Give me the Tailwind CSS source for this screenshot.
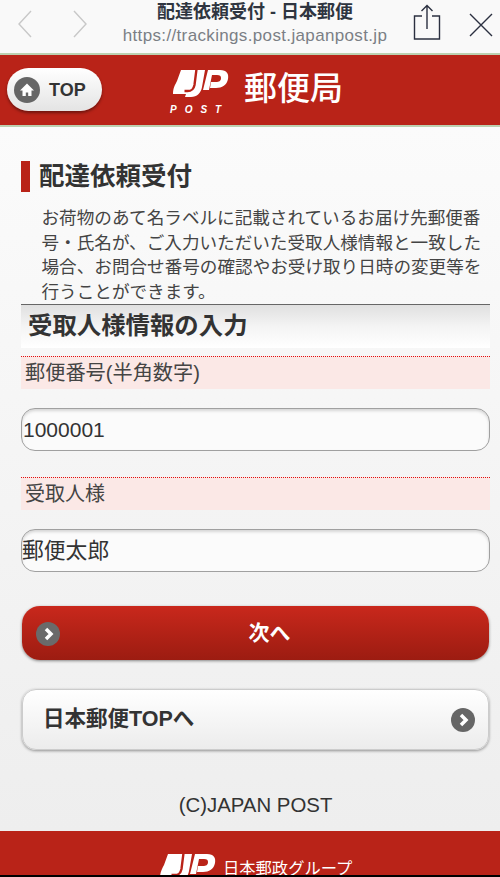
<!DOCTYPE html>
<html lang="ja"><head><meta charset="utf-8">
<script src="https://cdn.jsdelivr.net/npm/@tailwindcss/browser@4"></script>
</head>
<body class="m-0 w-[500px] h-[877px] overflow-hidden bg-[#f0f0f0] text-[#333] font-['Liberation_Sans','Noto_Sans_CJK_JP',sans-serif]">
<div class="h-[53px] bg-[#f9f9f9] relative">
  <svg class="absolute left-[17px] top-[9px]" width="72" height="30" fill="none" stroke="#c8c8c8" stroke-width="1.4"><path d="M14 2 2 15l12 13"/><path d="M57 2l12 13-12 13"/></svg>
  <div class="absolute left-[50px] w-[410px] top-[1px] text-center whitespace-nowrap">
    <div class="text-[18px] leading-[22px] font-bold text-[#2f3540]">配達依頼受付 - 日本郵便</div>
    <div class="text-[17px] leading-[26px] text-[#7b7f85] tracking-[0.35px]">https://trackings.post.japanpost.jp</div>
  </div>
  <svg class="absolute left-[413px] top-[4px]" width="28" height="37" fill="none" stroke="#2b3040" stroke-width="1.4"><path d="M9 12H1.500v23h25V12H19"/><path d="M14 25V1.500M8.500 7 14 1.500 19.500 7"/></svg>
  <svg class="absolute left-[468px] top-[12px]" width="26" height="26" fill="none" stroke="#2b3040" stroke-width="1.4"><path d="M2 2l22 22M24 2 2 24"/></svg>
</div>
<header class="h-[70px] box-content bg-[#b92318] border-y-2 border-[#bcd0b0] relative">
  <div class="absolute left-[7px] top-[13px] w-[95px] h-[43px] rounded-[22px] bg-gradient-to-b from-white to-[#e4e4e4] shadow-[0_2px_3px_rgba(0,0,0,0.4)] flex items-center pl-[7px] gap-[9px]">
    <span class="w-[26px] h-[26px] rounded-full bg-[#666] flex items-center justify-center">
      <svg width="16" height="16" viewBox="0 0 16 16" fill="#fff"><path d="M8 1.500 1 8.500h2.500V14h3.300v-3.500h2.400V14h3.300V8.500H15z"/></svg>
    </span>
    <span class="text-[18px] font-bold text-[#333] leading-none">TOP</span>
  </div>
  <svg class="absolute left-[172px] top-[14px]" width="57" height="33" viewBox="0 0 57 33"><path fill="#fff" d="M9 1h24l-3 17c-1 6-5 10-11 10h-6l1-3H1c0-6 2-9 4-13z"/><path fill="none" stroke="#b92318" stroke-width="2.400" d="M24.500 0l-2 16c-1 5-3 6-7 6h-3"/><path fill="#fff" d="M36 1h12c7 0 9 4 8 9-1 6-6 9-12 9h-6l1-6h5c3 0 5-1 5-4 0-2-1-3-4-3h-5l-3 15h-6z"/></svg>
  <div class="absolute left-[170px] top-[50px] text-[10px] leading-none font-bold italic text-white tracking-[8px]">POST</div>
  <div class="absolute left-[244px] top-[15px] text-[33px] leading-[38px] text-white font-medium">郵便局</div>
</header>
<main class="pl-[21px] pr-[10px] pb-[13px] bg-gradient-to-b from-[#fbfbfb] to-[#eeeeee]">
  <h1 class="pt-[34px]"><span class="block h-[31px] border-l-[9px] border-[#b92318] pl-[9px] text-[25.500px] leading-[31px] font-bold text-[#333]">配達依頼受付</span></h1>
  <p class="mt-[14px] pl-[20.500px] text-[17.600px] leading-[24.700px] text-[#444] h-[97px] whitespace-nowrap">お荷物のあて名ラベルに記載されているお届け先郵便番<br>号・氏名が、ご入力いただいた受取人様情報と一致した<br>場合、お問合せ番号の確認やお受け取り日時の変更等を<br>行うことができます。</p>
  <h2 class="mt-[1px] h-[44px] border-t border-[#666] bg-gradient-to-b from-[#e0e0e0] via-[#f4f4f4] to-white pl-[7px] text-[24.400px] leading-[42px] font-bold text-[#333]">受取人様情報の入力</h2>
  <div class="mt-[8px] h-[33px] border-t border-dotted border-[#e01010] bg-[#fbe8e6] pl-[4px] text-[20.200px] leading-[33px] text-[#444]">郵便番号(半角数字)</div>
  <div class="mt-[19px] h-[43px] border border-[#a0a0a0] rounded-[14px] bg-[#fbfbfb] shadow-[inset_0_2px_3px_rgba(0,0,0,0.15)] text-[21px] leading-[42px] pl-[1px] text-[#333]">1000001</div>
  <div class="mt-[26px] h-[33px] border-t border-dotted border-[#e01010] bg-[#fbe8e6] pl-[4px] text-[20px] leading-[33px] text-[#444]">受取人様</div>
  <div class="mt-[19px] h-[43px] border border-[#a0a0a0] rounded-[14px] bg-[#fbfbfb] shadow-[inset_0_2px_3px_rgba(0,0,0,0.15)] text-[21.800px] leading-[42px] text-[#333]">郵便太郎</div>
  <div class="mt-[34px] h-[54px] rounded-[18px] bg-gradient-to-b from-[#c9281c] to-[#9c1c11] shadow-[0_1px_3px_rgba(0,0,0,0.45)] relative flex items-center justify-center text-white text-[21px] font-bold pl-[28px] mx-[1px]">
    <span class="absolute left-[14px] top-[16px] w-[24px] h-[24px] rounded-full bg-[#6a6a6a] flex items-center justify-center"><svg width="13" height="14" fill="none" stroke="#fff" stroke-width="3.500"><path d="M4 2l5 5-5 5"/></svg></span>
    次へ
  </div>
  <div class="mt-[29px] h-[61px] rounded-[14px] bg-gradient-to-b from-white to-[#ececec] border border-[#ccc] shadow-[0_1px_3px_rgba(0,0,0,0.4)] relative flex items-center pl-[20px] text-[21.500px] font-bold text-[#333] mx-[1px]">
    日本郵便TOPへ
    <span class="absolute right-[13px] top-[18px] w-[24px] h-[24px] rounded-full bg-[#666] flex items-center justify-center"><svg width="13" height="14" fill="none" stroke="#fff" stroke-width="3.500"><path d="M4 2l5 5-5 5"/></svg></span>
  </div>
  <div class="mt-[43px] h-[25px] text-center text-[20.400px] leading-[25px] text-[#333]">(C)JAPAN POST</div>
</main>
<footer class="h-[44px] bg-[#b92318] relative overflow-hidden">
  <svg class="absolute left-[159px] top-[22px]" width="57" height="33" viewBox="0 0 57 33"><path fill="#fff" d="M9 1h24l-3 17c-1 6-5 10-11 10h-6l1-3H1c0-6 2-9 4-13z"/><path fill="none" stroke="#b92318" stroke-width="2.400" d="M24.500 0l-2 16c-1 5-3 6-7 6h-3"/><path fill="#fff" d="M36 1h12c7 0 9 4 8 9-1 6-6 9-12 9h-6l1-6h5c3 0 5-1 5-4 0-2-1-3-4-3h-5l-3 15h-6z"/></svg>
  <div class="absolute left-[223px] top-[26px] text-[16.300px] leading-[22px] text-white whitespace-nowrap">日本郵政グループ</div>
</footer>
<div class="h-[2px] bg-black"></div>
</body></html>
